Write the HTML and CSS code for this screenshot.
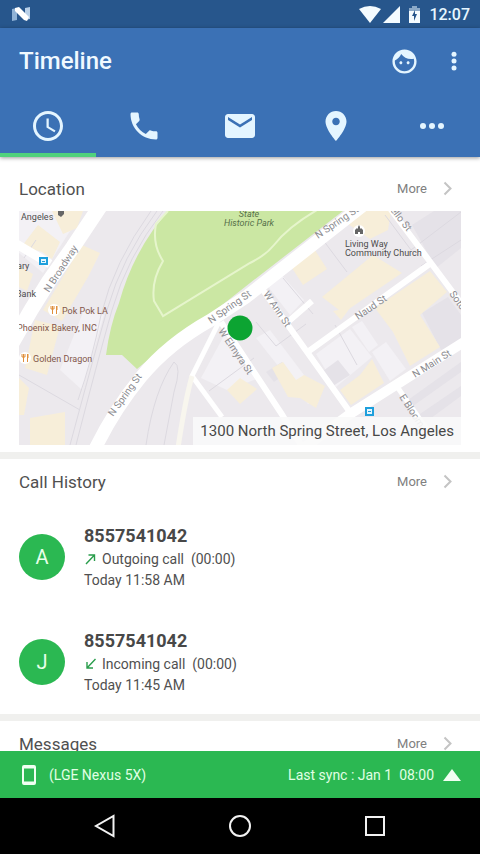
FILE: index.html
```html
<!DOCTYPE html>
<html>
  <head>
    <meta charset="utf-8">
    <meta name="viewport" content="width=device-width, initial-scale=1">
    <title>Timeline</title>
    <link rel="stylesheet" href="styles.css">
  </head>
  <body>
    <div class="status">
      <svg class="logo" width="18" height="14" viewBox="0 0 18 14">
        <path fill="#8fb2d6" d="M0 2l5-1v12l-5 1z"/>
        <path fill="#b9d0e8" d="M13 1l5-1v12l-5 1z"/>
        <path fill="#fff" d="M3 1l4-1 10 10-2 4-3-1L3 4z"/>
      </svg>
      <div class="status-icons">
        <svg width="22" height="17" viewBox="0 0 22 17"><path fill="#f4fbff" d="M0 3Q11-3 22 3L11 17z"/></svg>
        <svg width="17" height="17" viewBox="0 0 17 17"><path fill="#f4fbff" d="M17 0v17H0z"/></svg>
        <svg class="battery" width="11" height="17" viewBox="0 0 11 17">
          <path fill="#8ba9c8" d="M3 0h5v2h3v4H0V2h3z"/>
          <path fill="#f4fbff" d="M0 5h11v12H0z"/>
          <path fill="#27568c" d="M6 4L3 10h2v5l3-7H6z"/>
        </svg>
        <span class="clock">12:07</span>
      </div>
    </div>

    <header class="header">
      <div class="bar">
        <h1>Timeline</h1>
        <button class="icon-btn" type="button" aria-label="Profile">
          <svg width="29" height="29" viewBox="0 0 24 24"><path d="M9 11.750c-.69 0-1.250.56-1.250 1.250s.56 1.250 1.250 1.250 1.250-.56 1.250-1.250-.56-1.250-1.250-1.250zm6 0c-.69 0-1.250.56-1.250 1.250s.56 1.250 1.250 1.250 1.250-.56 1.250-1.250-.56-1.250-1.250-1.250zM12 2C6.480 2 2 6.480 2 12s4.480 10 10 10 10-4.480 10-10S17.520 2 12 2zm0 18c-4.410 0-8-3.590-8-8 0-.29.02-.58.05-.86 2.360-1.050 4.230-2.980 5.210-5.370C11.070 8.330 14.050 10 17.420 10c.78 0 1.530-.09 2.250-.26.21.71.33 1.470.33 2.260 0 4.410-3.590 8-8 8z"/></svg>
        </button>
        <button class="icon-btn" type="button" aria-label="Menu">
          <svg width="30" height="30" viewBox="0 0 24 24"><circle cx="12" cy="6.500" r="2"/><circle cx="12" cy="12" r="2"/><circle cx="12" cy="17.500" r="2"/></svg>
        </button>
      </div>
      <nav class="tabs">
        <a class="tab on" href="#timeline" aria-label="Timeline">
          <svg width="36" height="36" viewBox="0 0 24 24"><path d="M11.990 2C6.470 2 2 6.480 2 12s4.470 10 9.990 10C17.520 22 22 17.520 22 12S17.520 2 11.990 2zM12 20c-4.420 0-8-3.580-8-8s3.580-8 8-8 8 3.580 8 8-3.580 8-8 8zM12.500 7H11v6l5.250 3.150.75-1.230-4.500-2.670z"/></svg>
        </a>
        <a class="tab" href="#calls" aria-label="Calls">
          <svg width="36" height="36" viewBox="0 0 24 24"><path d="M6.620 10.790c1.440 2.830 3.760 5.140 6.590 6.590l2.200-2.200c.27-.27.67-.36 1.020-.24 1.120.37 2.330.57 3.570.57.55 0 1 .45 1 1V20c0 .55-.45 1-1 1-9.390 0-17-7.610-17-17 0-.55.45-1 1-1h3.500c.55 0 1 .45 1 1 0 1.250.2 2.450.57 3.570.11.35.03.74-.25 1.020l-2.200 2.200z"/></svg>
        </a>
        <a class="tab" href="#messages" aria-label="Messages">
          <svg width="36" height="36" viewBox="0 0 24 24"><path d="M20 4H4c-1.100 0-1.990.9-1.990 2L2 18c0 1.100.9 2 2 2h16c1.100 0 2-.9 2-2V6c0-1.100-.9-2-2-2zm0 4l-8 5-8-5V6l8 5 8-5v2z"/></svg>
        </a>
        <a class="tab" href="#location" aria-label="Location">
          <svg width="36" height="36" viewBox="0 0 24 24"><path d="M12 2C8.130 2 5 5.130 5 9c0 5.250 7 13 7 13s7-7.750 7-13c0-3.870-3.130-7-7-7zm0 9.500c-1.380 0-2.500-1.120-2.500-2.500s1.120-2.500 2.500-2.500 2.500 1.120 2.500 2.500-1.120 2.500-2.500 2.500z"/></svg>
        </a>
        <a class="tab" href="#more" aria-label="More">
          <svg width="36" height="36" viewBox="0 0 24 24"><circle cx="6" cy="12" r="2"/><circle cx="12" cy="12" r="2"/><circle cx="18" cy="12" r="2"/></svg>
        </a>
      </nav>
    </header>

    <main class="content">
      <section class="section first" id="location">
        <div class="section-head">
          <h2>Location</h2>
          <a class="more" href="#location">More
            <svg width="10" height="15" viewBox="0 0 10 15"><path d="M1.500 1.500l6 6-6 6"/></svg>
          </a>
        </div>
        <div class="map">
          <svg class="map-pic" viewBox="19 211 442 234" preserveAspectRatio="xMidYMid slice">
            <rect x="19" y="211" width="442" height="234" fill="#ece9ed"/>
            <!-- lighter blocks -->
            <g fill="#f3f1f5">
              <path d="M19 211h64l-40 62-24-20z"/>
              <path d="M84 310l20 5-22 75-22-20z"/>
              <path d="M227 330l32 48-32 12-26-12z"/>
              <path d="M266 284l14-11 24 27-14 15z"/>
              <path d="M316 354l34-25 22 28-36 30z"/>
              <path d="M352 327l10-6 16 24-9 7z"/>
              <path d="M372 352l14-10 20 27-16 12z"/>
              <path d="M256 338l14-8 50 66-12 8z"/>
            </g>
            <g fill="#e5e2e8">
              <path d="M323 371l15-11 12 15-17 11z"/>
              <path d="M412 225l22-14h27v37l-25 20z"/>
              <path d="M422 313l26-16 13 18v30l-20 5z"/>
              <path d="M266 372l16-10 6 10-14 10z"/>
              <path d="M408 400l53-38v10l-48 34zM417 416l44-30v10l-38 28z"/>
            </g>
            <!-- buildings -->
            <g fill="#f7eed9">
              <path d="M52 211h31l-6 17-14 6z"/>
              <path d="M22 246l16-21 22 17-8 17-10-7z"/>
              <path d="M19 266l14 8-6 17-8-4z"/>
              <path d="M82 245l18 8-12 24-26 44-19-11z"/>
              <path d="M35 320l25 6-13 49-22-7z"/>
              <path d="M30 418l35-6v33H30z"/>
              <path d="M19 378l10 10-5 27h-5z"/>
              <path d="M290 265l23-18 14 22-24 16z"/>
              <path d="M345 222l12-11h34l-3 19-18 9z"/>
              <path d="M322 297l51-42 29 18-59 40z"/>
              <path d="M375 308l55-37 17 21-27 23 20 32-30 19-17-34z"/>
              <path d="M333 311l17-3-9 12z"/>
              <path d="M272 368l11-6 13 18 8-5 21 11-9 22-16-10-12-1z"/>
              <path d="M340 390l20-15 12-16 12 24-33 22z"/>
              <path d="M227 390l13-12 17 11-17 15z"/>
            </g>
            <!-- park -->
            <path fill="#cbe7a3" d="M168 211h175L250 283 207 317 160 350 137 369 122 355H106Q110 325 119 303 130 263 153 230z"/>
            <path fill="none" stroke="#e6f5cc" stroke-width="2" d="M168 211l-12 13q-4 20 7 37-12 20-9 40l9 15 87-53q16-8 24-18 14-18 43-35"/>
            <!-- railway and lot lines -->
            <g fill="none" stroke="#dcd9e0">
              <path d="M163 211Q127 257 112 310T76 445M157 211Q122 257 107 310T70 445M151 211Q114 262 101 315 92 360 78 400"/>
              <path d="M146 445Q154 390 174 362q8 4 0 30l-10 53"/>
              <path d="M209 391l45-33M19 375l61 35M323 240l24 32M256 322l20 24 30-22M283 278l30 36M461 240l-40 26M335 325l22 40M385 215l26 35 50-38M24 258l12-18"/>
            </g>
            <!-- streets -->
            <g fill="none" stroke="#fff" stroke-linejoin="round">
              <path stroke-width="15" d="M105 199L73 247 49 281 31 310 8 350"/>
              <path stroke-width="9" d="M10 240l40 24"/>
              <path stroke-width="13" d="M366 203L246 297 211 320Q168 344 141 377T95 449"/>
              <path stroke-width="5" d="M219 322l-27 54 30 41"/>
              <path stroke="#f8f6ee" stroke-width="5" d="M192 376q-7 25-14 72"/>
              <path stroke-width="6" d="M221 322l62 94 20 32M260 286l92 129"/>
              <path stroke-width="6" d="M309 351l122-88M289 321l23-20M386 203l45 60 35 47"/>
              <path stroke-width="10" d="M467 340L350 414l-45 33"/>
              <path stroke-width="5" d="M398 388l35 50"/>
            </g>
            <!-- street names -->
            <g class="street">
              <text transform="translate(49 293) rotate(-57)">N Broadway</text>
              <text transform="translate(113 417) rotate(-54)">N Spring St</text>
              <text transform="translate(211 324) rotate(-35)">N Spring St</text>
              <text transform="translate(318 239) rotate(-34)">N Spring St</text>
              <text transform="translate(263 294) rotate(56)">W Ann St</text>
              <text transform="translate(218 331) rotate(56)">W Elmyra St</text>
              <text transform="translate(358 320) rotate(-34)">Naud St</text>
              <text transform="translate(386 205) rotate(52)">Cello St</text>
              <text transform="translate(449 294) rotate(54)">Soto</text>
              <text transform="translate(415 378) rotate(-32)">N Main St</text>
              <text transform="translate(399 397) rotate(57)">E Bloom</text>
            </g>
            <!-- places -->
            <g class="place">
              <text x="21" y="220">Angeles</text>
              <text x="17" y="269">ary</text>
              <text x="16" y="297">Bank</text>
              <text x="345" y="247">Living Way</text>
              <text x="345" y="256">Community Church</text>
            </g>
            <g class="place food">
              <text x="62" y="314">Pok Pok LA</text>
              <text x="17" y="331">Phoenix Bakery, INC</text>
              <text x="33" y="362">Golden Dragon</text>
            </g>
            <g class="place park" text-anchor="middle">
              <text x="249" y="217">State</text>
              <text x="249" y="226">Historic Park</text>
            </g>
            <circle cx="54" cy="310" r="6" fill="#fff"/>
            <circle cx="25" cy="358" r="6" fill="#fff"/>
            <g fill="none" stroke="#e08f3c">
              <path d="M51 306v3h3v-3M52.500 306v8M56.500 306v8M57 306v4"/>
              <path d="M22 354v3h3v-3M23.500 354v8M27.500 354v8M28 354v4"/>
            </g>
            <circle cx="359" cy="231" r="6" fill="#fff"/>
            <path fill="#666" d="M355 234v-4l2-2 1 1v-2l1-2 1 2v2l1-1 2 2v4h-3v-2h-2v2z"/>
            <path fill="#666" d="M58 211h6v3l-3 3-3-2z"/>
            <g fill="#e6f6fd" stroke="#1e9fdc">
              <path stroke-width="2" d="M40 258h7v6h-7zM366 408h7v7h-7z"/>
              <path d="M42 261.500h3M368 411.500h3"/>
            </g>
            <circle cx="240" cy="328" r="12.500" fill="#0ca432"/>
          </svg>
          <div class="address">1300 North Spring Street, Los Angeles</div>
        </div>
      </section>

      <section class="section" id="calls">
        <div class="section-head">
          <h2>Call History</h2>
          <a class="more" href="#calls">More
            <svg width="10" height="15" viewBox="0 0 10 15"><path d="M1.500 1.500l6 6-6 6"/></svg>
          </a>
        </div>
        <ul class="calls">
          <li class="call">
            <div class="avatar">A</div>
            <div class="info">
              <div class="number">8557541042</div>
              <div class="type">
                <svg width="12" height="12" viewBox="0 0 12 12"><path d="M2 11L10.500 2M4.500 2h6v6"/></svg>
                <span>Outgoing call&nbsp; (00:00)</span>
              </div>
              <div class="time">Today 11:58 AM</div>
            </div>
          </li>
          <li class="call">
            <div class="avatar">J</div>
            <div class="info">
              <div class="number">8557541042</div>
              <div class="type">
                <svg width="12" height="12" viewBox="0 0 12 12"><path d="M11.500 1L3 10M3 4v6h6"/></svg>
                <span>Incoming call&nbsp; (00:00)</span>
              </div>
              <div class="time">Today 11:45 AM</div>
            </div>
          </li>
        </ul>
      </section>

      <section class="section" id="messages">
        <div class="section-head">
          <h2>Messages</h2>
          <a class="more" href="#messages">More
            <svg width="10" height="15" viewBox="0 0 10 15"><path d="M1.500 1.500l6 6-6 6"/></svg>
          </a>
        </div>
      </section>
    </main>

    <footer class="sync">
      <svg width="14" height="20" viewBox="0 0 14 20"><path fill-rule="evenodd" d="M2 0h10q2 0 2 2v16q0 2-2 2H2q-2 0-2-2V2q0-2 2-2zM2 3.500v13h10v-13z"/></svg>
      <span class="device">(LGE Nexus 5X)</span>
      <span class="last">Last sync : Jan 1&nbsp; 08:00</span>
      <svg width="18" height="12" viewBox="0 0 18 12"><path d="M9 0l9 12H0z"/></svg>
    </footer>

    <div class="navbar">
      <button type="button" aria-label="Back"><svg width="24" height="24" viewBox="0 0 24 24"><path d="M20.500 2v20L3 12z"/></svg></button>
      <button type="button" aria-label="Home"><svg width="24" height="24" viewBox="0 0 24 24"><circle cx="12" cy="12" r="10"/></svg></button>
      <button type="button" aria-label="Recent"><svg width="24" height="24" viewBox="0 0 24 24"><path d="M3 3h18v18H3z"/></svg></button>
    </div>
  </body>
</html>
```
FILE: styles.css
```css
*{
  margin: 0;
  padding: 0;
  box-sizing: border-box;
}
body{
  height: 100vh;
  display: flex;
  flex-direction: column;
  font-family: Roboto, "Noto Sans", sans-serif;
  font-size: 14px;
  color: #505050;
  background: #fff;
  overflow: hidden;
}
svg{
  display: block;
  flex: none;
}
a{
  color: inherit;
  text-decoration: none;
}
button{
  border: 0;
  background: none;
  font: inherit;
  cursor: pointer;
}
ul{
  list-style: none;
}

/* status bar */
.status{
  flex: none;
  height: 28px;
  padding: 0 10px 0 12px;
  display: flex;
  align-items: center;
  justify-content: space-between;
  background: #27568c;
}
.status-icons{
  display: flex;
  align-items: center;
  gap: 2px;
}
.battery{
  margin: 0 7px;
}
.clock{
  font-size: 16px;
  font-weight: 500;
  color: #e6f6ff;
}

/* header */
.header{
  flex: none;
  position: relative;
  background: #3b71b5;
  box-shadow: 0 1px 4px rgba(0,0,0,0.4);
  fill: #e4f5ff;
}
.bar{
  height: 66px;
  padding: 0 11px 0 19px;
  display: flex;
  align-items: center;
}
.bar h1{
  flex: 1;
  font-size: 24px;
  font-weight: 500;
  color: #f0f9ff;
}
.icon-btn + .icon-btn{
  margin-left: 20px;
}
.tabs{
  display: flex;
}
.tab{
  flex: 1;
  height: 63px;
  display: flex;
  align-items: center;
  justify-content: center;
  border-top: 4px solid transparent;
  border-bottom: 4px solid transparent;
}
.tab.on{
  border-bottom-color: #50d27c;
}

/* content */
.content{
  flex: 1;
  min-height: 0;
  overflow: hidden;
}
.section{
  border-top: 7px solid #f0f0ee;
}
.section.first{
  border-top: 0;
  padding: 9px 0 7px;
}
.section-head{
  height: 45px;
  padding: 0 27px 0 19px;
  display: flex;
  align-items: center;
  justify-content: space-between;
}
.section-head h2{
  font-size: 17px;
  font-weight: 400;
}
.more{
  display: flex;
  align-items: center;
  gap: 16px;
  font-size: 13px;
  color: #808080;
}
.more svg{
  fill: none;
  stroke: #c4c4c4;
  stroke-width: 2;
}

/* map */
.map{
  position: relative;
  height: 234px;
  margin: 0 19px;
}
.map-pic{
  width: 100%;
  height: 100%;
}
.street{
  font-size: 10px;
  fill: #8c8c90;
}
.place{
  font-size: 9px;
  fill: #4c4c4c;
}
.food{
  fill: #82574a;
}
.park{
  font-style: italic;
  fill: #56704a;
}
.address{
  position: absolute;
  right: 0;
  bottom: 0;
  height: 28px;
  padding: 0 7px;
  line-height: 28px;
  font-size: 15px;
  color: #484848;
  background: rgba(250,250,250,0.9);
}

/* calls */
.call{
  height: 105px;
  padding: 0 19px;
  display: flex;
  align-items: center;
  gap: 19px;
}
.avatar{
  width: 46px;
  height: 46px;
  line-height: 46px;
  border-radius: 50%;
  text-align: center;
  font-size: 20px;
  color: #e8ffe9;
  background: #2bb852;
}
.number{
  line-height: 24px;
  font-size: 18px;
  font-weight: 700;
  color: #484848;
}
.type{
  display: flex;
  align-items: center;
  gap: 6px;
  line-height: 22px;
}
.type svg{
  fill: none;
  stroke: #2a9d4c;
  stroke-width: 1.4;
}
.time{
  line-height: 20px;
}

/* sync bar */
.sync{
  flex: none;
  height: 47px;
  padding: 0 19px 0 22px;
  display: flex;
  align-items: center;
  color: #e0ffe4;
  fill: #f0fff2;
  background: #2bb852;
}
.device{
  flex: 1;
  margin-left: 13px;
}
.last{
  margin-right: 9px;
}

/* android buttons */
.navbar{
  flex: none;
  height: 56px;
  padding: 0 38px;
  display: flex;
  align-items: center;
  justify-content: space-around;
  background: #000;
  fill: none;
  stroke: #f2f2f2;
  stroke-width: 2;
}
```
